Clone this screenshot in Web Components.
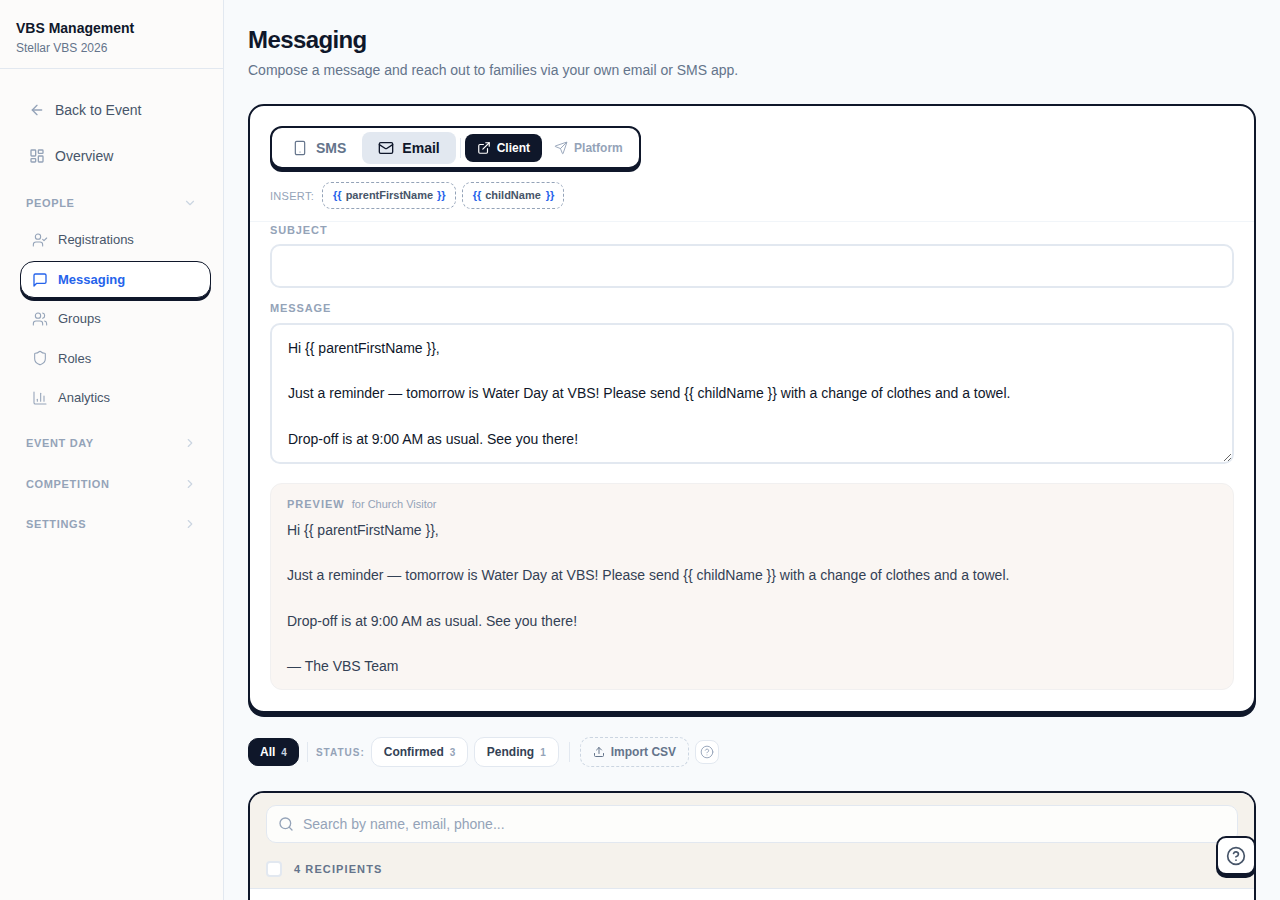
<!DOCTYPE html>
<html>
<head>
<meta charset="utf-8">
<title>Messaging</title>
<style>
  html, body { margin: 0; height: 900px; overflow: hidden; }
  body { font-family: "Liberation Sans", Arial, sans-serif; background: #f8fafc; color: #0f172a; }
  .app { display: flex; height: 900px; }
</style>
</head>
<body>
<div class="app">
  <side-bar></side-bar>
  <messaging-page></messaging-page>
</div>
<help-fab></help-fab>

<script>
const icons = {
  back: '<path d="m12 19-7-7 7-7"/><path d="M19 12H5"/>',
  grid: '<rect width="7" height="9" x="3" y="3" rx="1"/><rect width="7" height="5" x="14" y="3" rx="1"/><rect width="7" height="9" x="14" y="12" rx="1"/><rect width="7" height="5" x="3" y="16" rx="1"/>',
  userCheck: '<path d="M16 21v-2a4 4 0 0 0-4-4H6a4 4 0 0 0-4 4v2"/><circle cx="9" cy="7" r="4"/><path d="m16 11 2 2 4-4"/>',
  message: '<path d="M21 15a2 2 0 0 1-2 2H7l-4 4V5a2 2 0 0 1 2-2h14a2 2 0 0 1 2 2z"/>',
  users: '<path d="M16 21v-2a4 4 0 0 0-4-4H6a4 4 0 0 0-4 4v2"/><circle cx="9" cy="7" r="4"/><path d="M22 21v-2a4 4 0 0 0-3-3.87"/><path d="M16 3.13a4 4 0 0 1 0 7.75"/>',
  shield: '<path d="M20 13c0 5-3.5 7.5-7.66 8.95a1 1 0 0 1-.67-.01C7.5 20.5 4 18 4 13V6a1 1 0 0 1 1-1c2 0 4.5-1.2 6.24-2.72a1.17 1.17 0 0 1 1.52 0C14.51 3.81 17 5 19 5a1 1 0 0 1 1 1z"/>',
  chart: '<path d="M3 3v16a2 2 0 0 0 2 2h16"/><path d="M18 17V9"/><path d="M13 17V5"/><path d="M8 17v-3"/>',
  down: '<path d="m6 9 6 6 6-6"/>',
  right: '<path d="m9 18 6-6-6-6"/>',
  phone: '<rect width="14" height="20" x="5" y="2" rx="2"/><path d="M12 18h.01"/>',
  mail: '<rect width="20" height="16" x="2" y="4" rx="2"/><path d="m22 7-8.97 5.7a1.94 1.94 0 0 1-2.06 0L2 7"/>',
  external: '<path d="M15 3h6v6"/><path d="M10 14 21 3"/><path d="M18 13v6a2 2 0 0 1-2 2H5a2 2 0 0 1-2-2V8a2 2 0 0 1 2-2h6"/>',
  send: '<path d="M14.536 21.686a.5.5 0 0 0 .937-.024l6.5-19a.496.496 0 0 0-.635-.635l-19 6.5a.5.5 0 0 0-.024.937l7.93 3.18a2 2 0 0 1 1.112 1.11z"/><path d="m21.854 2.147-10.94 10.939"/>',
  upload: '<path d="M12 3v12"/><path d="m17 8-5-5-5 5"/><path d="M21 15v4a2 2 0 0 1-2 2H5a2 2 0 0 1-2-2v-4"/>',
  help: '<circle cx="12" cy="12" r="10"/><path d="M9.09 9a3 3 0 0 1 5.83 1c0 2-3 3-3 3"/><path d="M12 17h.01"/>',
  search: '<path d="m21 21-4.34-4.34"/><circle cx="11" cy="11" r="8"/>'
};

function icon(name, size, color, width) {
  return `<svg xmlns="http://www.w3.org/2000/svg" width="${size}" height="${size}" viewBox="0 0 24 24" fill="none" stroke="${color}" stroke-width="${width || 2}" stroke-linecap="round" stroke-linejoin="round" style="flex:none;display:block">${icons[name]}</svg>`;
}

class SideBar extends HTMLElement {
  constructor() {
    super();
    const link = (ic, label) => `<a class="top">${icon(ic, 16, '#94a3b8')}<span>${label}</span></a>`;
    const sub = (ic, label, cls) => `<a class="sub ${cls || ''}">${icon(ic, 16, cls ? '#2563eb' : '#94a3b8', cls ? 2 : 1.6)}<span>${label}</span></a>`;
    const sec = (label, ic, cls) => `<div class="sec ${cls || ''}"><span>${label}</span>${icon(ic, 14, '#cbd5e1')}</div>`;
    this.attachShadow({ mode: 'open' }).innerHTML = `
      <style>
        :host { display: block; flex: none; width: 224px; height: 900px; box-sizing: border-box; background: #fcfbfa; border-right: 1px solid #e2e8f0; }
        header { box-sizing: border-box; padding: 20px 16px 0; border-bottom: 1px solid #e2e8f0; height: 69px; }
        h1 { margin: 0; font-size: 14px; line-height: 17px; font-weight: 700; color: #0f172a; }
        p { margin: 3px 0 0; font-size: 12px; line-height: 16px; color: #64748b; }
        nav { padding: 18px 12px 0 20px; display: flex; flex-direction: column; }
        a { display: flex; align-items: center; color: #475569; }
        .top { height: 46px; gap: 10px; padding-left: 9px; font-size: 14px; }
        .sec { display: flex; align-items: center; justify-content: space-between; height: 40.5px; padding: 0 13px 0 6px; font-size: 11px; font-weight: 700; letter-spacing: .65px; color: #94a3b8; width: 171px; }
        .sec.first { height: 34px; margin-top: 7px; }
        .sec.after { margin-top: 5.5px; }
        .sub { height: 39.5px; gap: 10px; padding-left: 12px; font-size: 13px; box-sizing: border-box; width: 191px; }
        .active { height: 37px; margin: 1.5px 0 .75px; border: 1.5px solid #0f172a; border-radius: 14px; box-shadow: 0 3px 0 #0f172a; background: #fff; color: #2563eb; font-weight: 700; padding-left: 11px; }
      </style>
      <header><h1>VBS Management</h1><p>Stellar VBS 2026</p></header>
      <nav>
        ${link('back', 'Back to Event')}
        ${link('grid', 'Overview')}
        ${sec('PEOPLE', 'down', 'first')}
        ${sub('userCheck', 'Registrations')}
        ${sub('message', 'Messaging', 'active')}
        ${sub('users', 'Groups')}
        ${sub('shield', 'Roles')}
        ${sub('chart', 'Analytics')}
        ${sec('EVENT DAY', 'right', 'after')}
        ${sec('COMPETITION', 'right')}
        ${sec('SETTINGS', 'right')}
      </nav>`;
  }
}
customElements.define('side-bar', SideBar);

class ComposeCard extends HTMLElement {
  constructor() {
    super();
    const msg = `Hi {{ parentFirstName }},

Just a reminder — tomorrow is Water Day at VBS! Please send {{ childName }} with a change of clothes and a towel.

Drop-off is at 9:00 AM as usual. See you there!`;
    this.attachShadow({ mode: 'open' }).innerHTML = `
      <style>
        :host { display: block; background: #fff; border: 2px solid #0f172a; border-radius: 16px; box-shadow: 0 4px 0 #0f172a; height: 609px; box-sizing: border-box; }
        .top { padding: 20px 20px 0; border-bottom: 1px solid #f1f5f9; height: 116px; box-sizing: border-box; }
        .modes { display: inline-flex; align-items: center; border: 2px solid #0f172a; border-radius: 12px; box-shadow: 0 3px 0 #0f172a; padding: 4px 4px 3px; background: #fff; vertical-align: top; }
        .m { display: flex; align-items: center; gap: 8px; height: 32px; border-radius: 8px; padding: 0 16px; font-size: 14px; font-weight: 700; color: #64748b; }
        .m.on { background: #e2e8f0; color: #0f172a; }
        .div { width: 1px; height: 20px; background: #e2e8f0; margin: 0 4px; }
        .k { display: flex; align-items: center; gap: 6px; height: 28px; border-radius: 8px; padding: 0 12px; font-size: 12px; font-weight: 700; color: #94a3b8; }
        .k.on { background: #0f172a; color: #fff; }
        .ins { display: flex; align-items: center; gap: 6px; margin-top: 13px; }
        .ins > span { font-size: 11px; letter-spacing: .3px; color: #94a3b8; margin-right: 2px; }
        .chip { display: flex; align-items: center; gap: 4px; height: 27px; box-sizing: border-box; border: 1px dashed #94a3b8; border-radius: 9px; padding: 0 9px 1px 10px; font-size: 11px; font-weight: 700; color: #475569; }
        .chip b { color: #2563eb; }
        .chip.short b:last-child { margin-left: 1px; }
        .body { padding: 0 20px; }
        label { display: block; font-size: 11px; line-height: 14px; font-weight: 700; letter-spacing: .88px; color: #94a3b8; margin: 0 0 7px; }
        .subject { display: block; width: 100%; height: 44px; box-sizing: border-box; border: 2px solid #e2e8f0; border-radius: 10px; background: #fff; margin-bottom: 13px; outline: none; padding: 0 16px; font: inherit; }
        textarea { display: block; width: 100%; height: 141px; box-sizing: border-box; border: 2px solid #e2e8f0; border-radius: 10px; padding: 11.75px 16px; font: 14px/22.75px "Liberation Sans", Arial, sans-serif; color: #0f172a; resize: vertical; outline: none; margin: 8px 0 0; overflow: hidden; }
        .preview { margin-top: 19px; height: 207px; box-sizing: border-box; background: #faf6f3; border: 1px solid #f1f0f0; border-radius: 12px; padding: 13px 16px; }
        .ph { font-size: 11px; line-height: 14px; color: #94a3b8; display: flex; align-items: baseline; gap: 7px; }
        .ph b { letter-spacing: 1px; }
        .txt { margin-top: 7.75px; font-size: 14px; line-height: 22.75px; color: #334155; white-space: pre-wrap; }
      </style>
      <div class="top">
        <div class="modes">
          <div class="m">${icon('phone', 16, '#64748b', 1.8)}SMS</div>
          <div class="m on">${icon('mail', 16, '#0f172a')}Email</div>
          <div class="div"></div>
          <div class="k on">${icon('external', 14, '#fff')}Client</div>
          <div class="k">${icon('send', 14, '#94a3b8', 1.6)}Platform</div>
        </div>
        <div class="ins"><span>INSERT:</span>
          <div class="chip"><b>{{</b>parentFirstName<b>}}</b></div>
          <div class="chip short"><b>{{</b>childName<b>}}</b></div>
        </div>
      </div>
      <div class="body">
        <label style="margin-top:1px">SUBJECT</label>
        <input class="subject">
        <label style="margin-bottom:0">MESSAGE</label>
        <textarea spellcheck="false">${msg}</textarea>
        <div class="preview">
          <div class="ph"><b>PREVIEW</b><span>for Church Visitor</span></div>
          <div class="txt">${msg}

— The VBS Team</div>
        </div>
      </div>`;
  }
}
customElements.define('compose-card', ComposeCard);

class FilterBar extends HTMLElement {
  constructor() {
    super();
    this.attachShadow({ mode: 'open' }).innerHTML = `
      <style>
        :host { display: flex; align-items: center; height: 30px; font-size: 12px; font-weight: 700; color: #334155; }
        .p { display: flex; align-items: center; gap: 6px; height: 30px; box-sizing: border-box; padding: 0 12px; border: 1px solid #e2e8f0; border-radius: 10px; background: #fff; }
        .p i { font-style: normal; font-size: 10px; color: #94a3b8; }
        .all { background: #0f172a; border-color: #0f172a; color: #fff; height: 28px; padding: 0 11px; }
        .all i { color: #cbd5e1; }
        .conf { padding-right: 11.5px; }
        .v { width: 1px; height: 20px; background: #e2e8f0; }
        .lab { font-size: 10px; letter-spacing: 1px; color: #94a3b8; margin: 0 6px 0 8px; }
        .imp { border: 1px dashed #cbd5e1; background: none; color: #64748b; padding: 0 12px; gap: 6px; }
        .q { width: 24px; height: 24px; box-sizing: border-box; border: 1px solid #e2e8f0; border-radius: 8px; background: #fff; display: flex; align-items: center; justify-content: center; margin-left: 6px; }
      </style>
      <div class="p all">All <i>4</i></div>
      <div class="v" style="margin-left:8px"></div>
      <span class="lab">STATUS:</span>
      <div class="p conf">Confirmed <i>3</i></div>
      <div class="p" style="margin-left:6px">Pending <i>1</i></div>
      <div class="v" style="margin:0 10px"></div>
      <div class="p imp">${icon('upload', 12, '#64748b')}Import CSV</div>
      <div class="q">${icon('help', 14, '#94a3b8', 1.6)}</div>`;
  }
}
customElements.define('filter-bar', FilterBar);

class RecipientCard extends HTMLElement {
  constructor() {
    super();
    this.attachShadow({ mode: 'open' }).innerHTML = `
      <style>
        :host { display: block; background: #fff; border: 2px solid #0f172a; border-bottom: none; border-radius: 16px 16px 0 0; height: 120px; overflow: hidden; box-sizing: border-box; }
        .head { background: #f5f2ec; padding: 12px 16px 0; height: 96px; box-sizing: border-box; border-bottom: 1px solid #e2e8f0; }
        .search { display: flex; align-items: center; gap: 9px; height: 38px; box-sizing: border-box; border: 1.5px solid #e2e8f0; border-radius: 10px; background: #fdfdfb; padding: 0 11px; font-size: 14px; color: #94a3b8; }
        .row { display: flex; align-items: center; gap: 12px; margin-top: 18px; font-size: 11px; font-weight: 700; letter-spacing: 1.1px; color: #64748b; }
        .cb { width: 16px; height: 16px; box-sizing: border-box; border: 2px solid #e2e8f0; border-radius: 4px; background: #fff; }
      </style>
      <div class="head">
        <div class="search">${icon('search', 16, '#94a3b8')}<span>Search by name, email, phone...</span></div>
        <div class="row"><div class="cb"></div><span>4 RECIPIENTS</span></div>
      </div>`;
  }
}
customElements.define('recipient-card', RecipientCard);

class MessagingPage extends HTMLElement {
  constructor() {
    super();
    this.attachShadow({ mode: 'open' }).innerHTML = `
      <style>
        :host { display: block; flex: 1; min-width: 0; padding: 24px 24px 0; box-sizing: border-box; height: 900px; overflow: hidden; }
        h2 { margin: 0; font-size: 24px; line-height: 32px; font-weight: 700; letter-spacing: -.6px; color: #0f172a; }
        p { margin: 4px 0 0; font-size: 14px; line-height: 20px; color: #64748b; }
        compose-card { margin-top: 24px; }
        filter-bar { margin-top: 24px; }
        recipient-card { margin-top: 24px; }
      </style>
      <h2>Messaging</h2>
      <p>Compose a message and reach out to families via your own email or SMS app.</p>
      <compose-card></compose-card>
      <filter-bar></filter-bar>
      <recipient-card></recipient-card>`;
  }
}
customElements.define('messaging-page', MessagingPage);

class HelpFab extends HTMLElement {
  constructor() {
    super();
    this.attachShadow({ mode: 'open' }).innerHTML = `
      <style>
        :host { position: fixed; right: 24px; bottom: 25px; width: 40px; height: 39px; box-sizing: border-box; display: flex; align-items: center; justify-content: center; background: #fff; border: 2px solid #0f172a; border-radius: 10px; box-shadow: 0 3px 0 #0f172a; }
      </style>
      ${icon('help', 20, '#475569')}`;
  }
}
customElements.define('help-fab', HelpFab);
</script>
</body>
</html>
